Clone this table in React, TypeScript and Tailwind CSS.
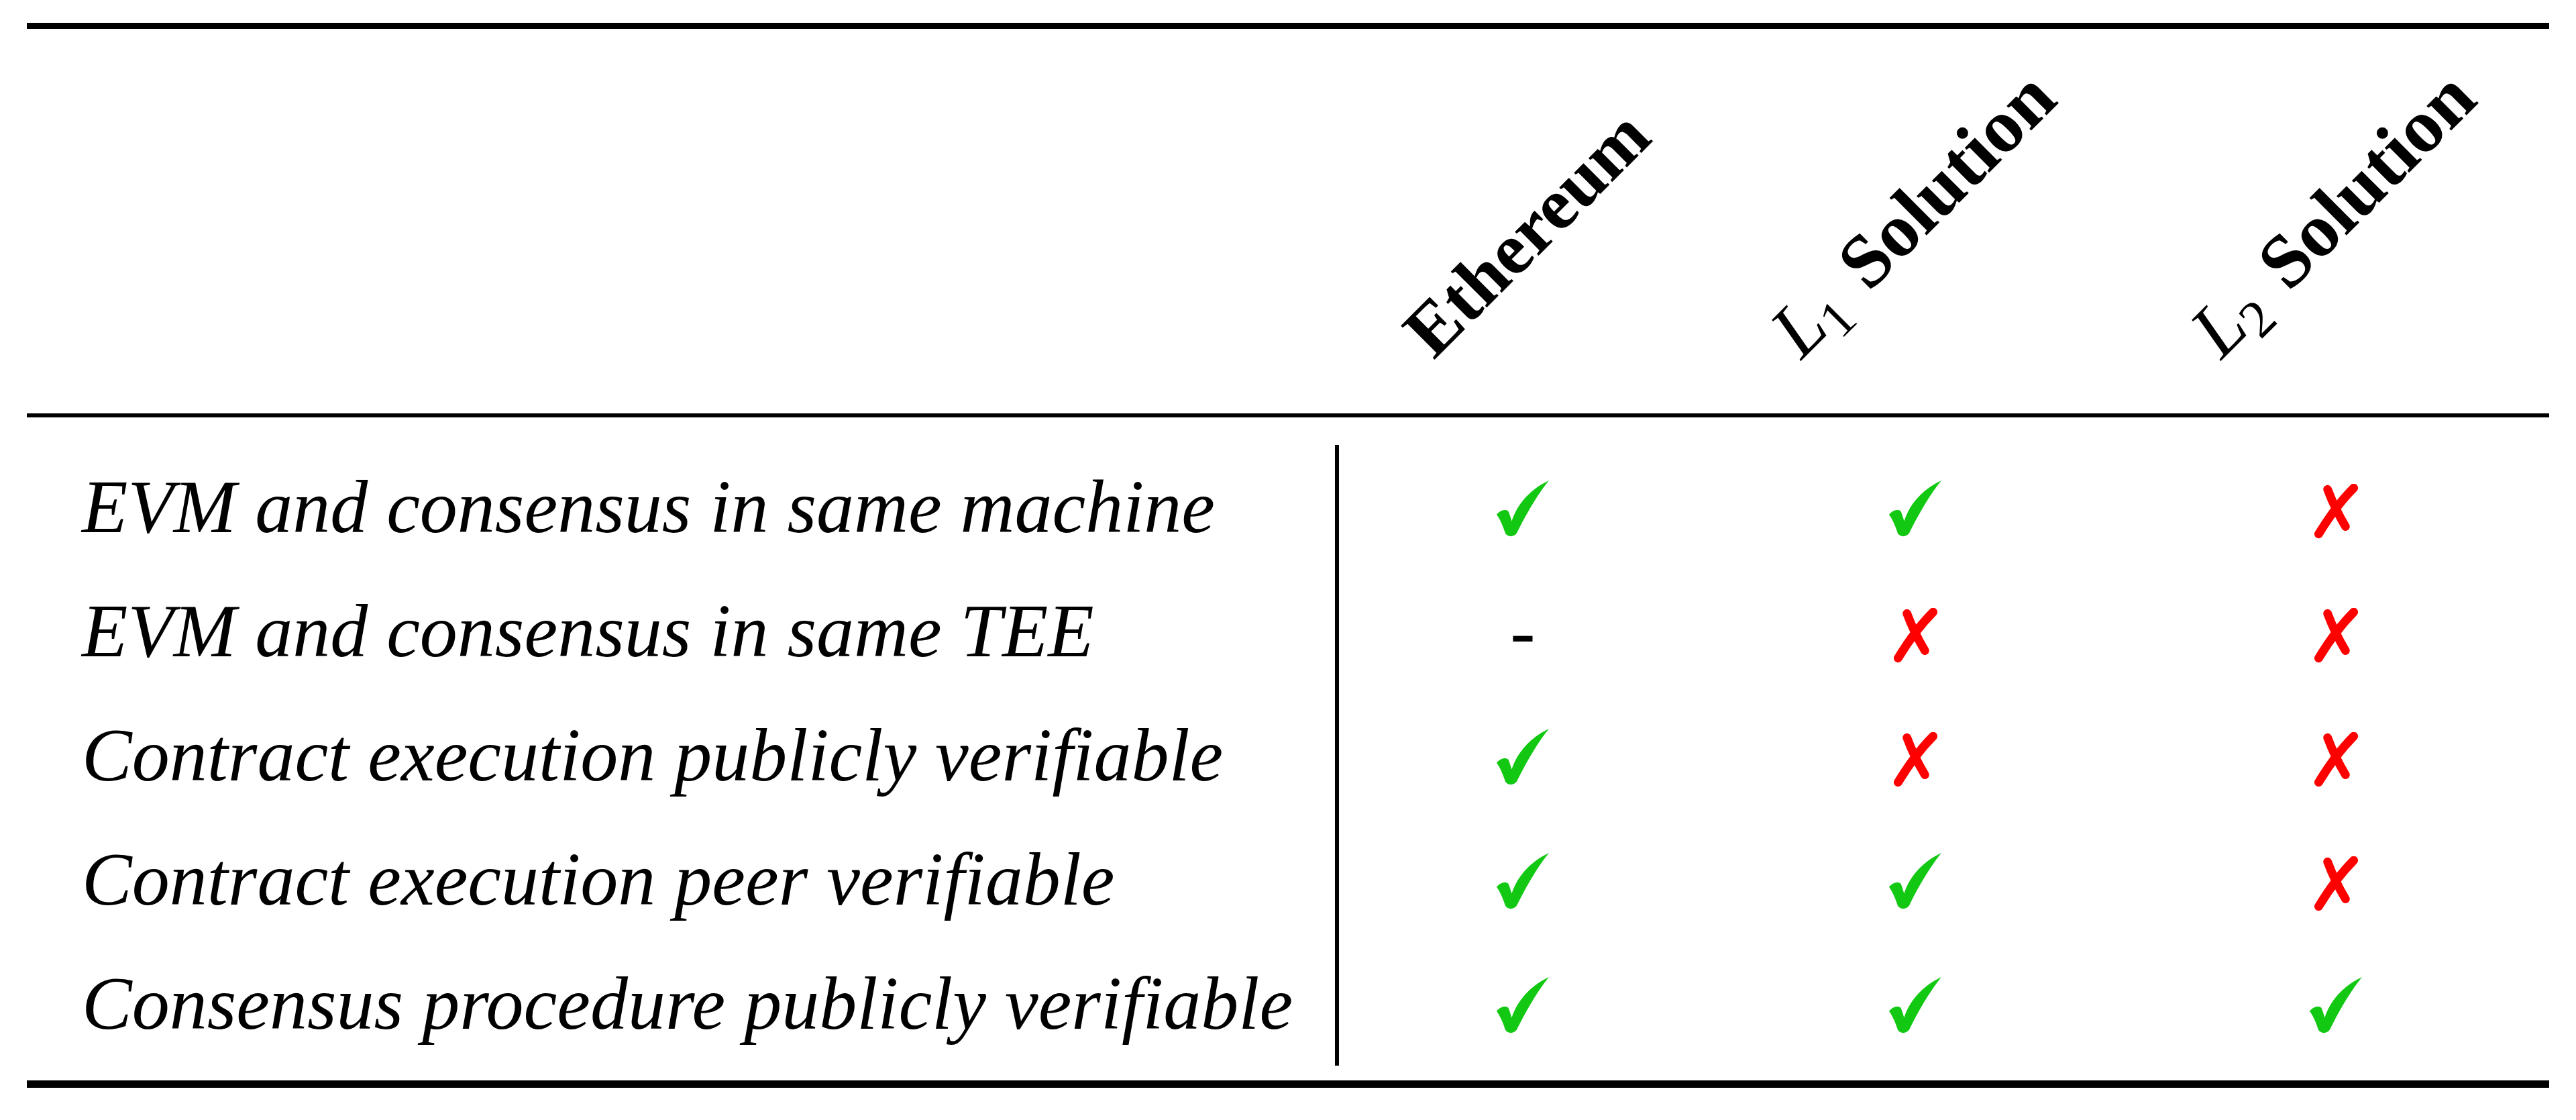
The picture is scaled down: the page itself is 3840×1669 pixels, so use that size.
type Mark = 'yes' | 'no' | 'none';

const rows: { label: string; marks: Mark[] }[] = [
  { label: 'EVM and consensus in same machine', marks: ['yes', 'yes', 'no'] },
  { label: 'EVM and consensus in same TEE', marks: ['none', 'no', 'no'] },
  { label: 'Contract execution publicly verifiable', marks: ['yes', 'no', 'no'] },
  { label: 'Contract execution peer verifiable', marks: ['yes', 'yes', 'no'] },
  { label: 'Consensus procedure publicly verifiable', marks: ['yes', 'yes', 'yes'] },
];

function Check() {
  return (
    <svg width="78" height="84" viewBox="0 0 80 86" className="mt-[4px]">
      <path
        d="M0 52 C5 46 13 43 18 47 C20 52 22 58 23 62 C31 37 50 14 80 0 C66 17 47 47 31 80 C27 87 16 87 13 80 C10 70 5 59 0 52 Z"
        fill="#12c812"
      />
    </svg>
  );
}

function Cross() {
  return (
    <svg width="66" height="82" viewBox="0 0 64 80" className="mt-[12px]">
      <g stroke="#ff0000" strokeWidth="12.5" strokeLinecap="round" fill="none">
        <path d="M20 8 Q30 35 46 62" />
        <path d="M58 6 Q32 32 7 73" />
      </g>
    </svg>
  );
}

function Cell({ mark }: { mark: Mark }) {
  return (
    <div className="h-[185px] flex items-center justify-center">
      {mark === 'yes' && <Check />}
      {mark === 'no' && <Cross />}
      {mark === 'none' && <span className="leading-[185px]">-</span>}
    </div>
  );
}

const colWidths = ['w-[548px]', 'w-[622px]', 'w-[632px]'];

export default function App() {
  return (
    <div className="w-[3840px] h-[1669px] bg-white text-black font-['Liberation_Serif',serif] text-[112px] pt-[34px] px-[40px]">
      <div className="h-[9px] bg-black" />

      {/* header with rotated column titles */}
      <div className="h-[573px] flex">
        <div className="w-[1956px]" />
        <div className="w-[548px] flex items-end">
          <span className="ml-[154px] mb-[66px] text-[109px] leading-none whitespace-nowrap origin-bottom-left -rotate-45 font-bold">
            Ethereum
          </span>
        </div>
        <div className="w-[622px] flex items-end">
          <span className="ml-[154px] mb-[66px] text-[113px] leading-none whitespace-nowrap origin-bottom-left -rotate-45">
            <span className="italic">L</span>
            <sub className="text-[0.7em]">1</sub>
            <span className="ml-[40px] font-bold">Solution</span>
          </span>
        </div>
        <div className="w-[632px] flex items-end">
          <span className="ml-[158px] mb-[66px] text-[113px] leading-none whitespace-nowrap origin-bottom-left -rotate-45">
            <span className="italic">L</span>
            <sub className="text-[0.7em]">2</sub>
            <span className="ml-[40px] font-bold">Solution</span>
          </span>
        </div>
      </div>

      <div className="h-[6px] bg-black" />

      <div className="flex pt-[41px] pb-[22px]">
        <div className="w-[1956px] border-r-[6px] border-black pl-[82px] italic">
          {rows.map((r) => (
            <div key={r.label} className="h-[185px] leading-[185px] whitespace-nowrap">
              {r.label}
            </div>
          ))}
        </div>
        {colWidths.map((w, i) => (
          <div key={i} className={w}>
            {rows.map((r) => (
              <Cell key={r.label} mark={r.marks[i]} />
            ))}
          </div>
        ))}
      </div>

      <div className="h-[11px] bg-black" />
    </div>
  );
}
